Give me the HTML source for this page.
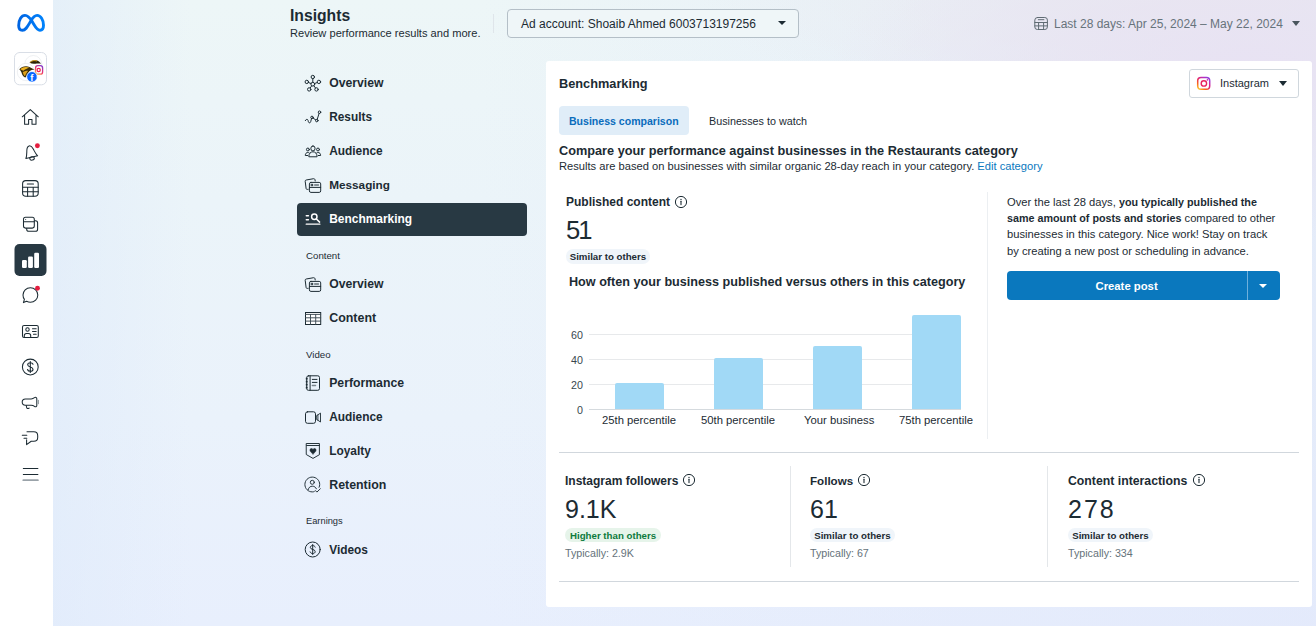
<!DOCTYPE html>
<html lang="en">
<head>
<meta charset="utf-8">
<title>Insights</title>
<style>
*{box-sizing:border-box;margin:0;padding:0}
html,body{width:1316px;height:626px;overflow:hidden}
body{font-family:"Liberation Sans",sans-serif;color:#1c2b33;position:relative;
background:
 radial-gradient(ellipse 420px 170px at 1250px 70px, rgba(232,226,243,1) 0%, rgba(232,227,242,.7) 45%, rgba(232,228,240,0) 100%),
 radial-gradient(ellipse 500px 120px at 1200px 0px, rgba(233,232,238,.9) 0%, rgba(233,232,238,0) 100%),
 linear-gradient(90deg, rgba(222,234,250,.55) 53px, rgba(222,234,250,0) 190px),
 linear-gradient(90deg, rgba(224,230,250,0) 480px, rgba(224,230,250,.55) 1316px),
 linear-gradient(180deg,#edf6f7 0px,#ebf4f9 200px,#eaf2fb 420px,#e8effd 626px);}
.abs{position:absolute}
#rail{left:0;top:0;width:53px;height:626px;background:#fff}
.t{position:absolute;white-space:nowrap;line-height:1}
.b{font-weight:700}
#card{left:546px;top:61px;width:766px;height:546.400px;background:#fff;border-radius:3px}
.nav{position:absolute;left:329.200px;font-weight:700;font-size:12.3px;white-space:nowrap;line-height:14px}
.sec{position:absolute;left:306px;font-size:9.7px;white-space:nowrap;line-height:1}
.pill{position:absolute;height:14.500px;border-radius:7.250px;font-size:9.7px;font-weight:700;line-height:15.5px;padding:0 5px;white-space:nowrap}
.bar{position:absolute;background:#a1d9f6;border-radius:2px 2px 0 0}
.grid{position:absolute;left:589px;width:372px;height:1px;background:#e7e9eb}
</style>
</head>
<body>
<div id="rail" class="abs"></div>
<svg class="abs" style="left:0;top:0" width="53" height="626" viewBox="0 0 53 626" fill="none" stroke="#1c2b33" stroke-width="1.05" stroke-linecap="round" stroke-linejoin="round">
<defs>
<linearGradient id="mg" x1="0" y1="0" x2="1" y2="0"><stop offset="0" stop-color="#0064e1"/><stop offset=".5" stop-color="#0073f0"/><stop offset="1" stop-color="#0082fb"/></linearGradient>
<linearGradient id="ig" x1="0.200" y1="1" x2=".8" y2="0"><stop offset="0" stop-color="#fcb045"/><stop offset=".45" stop-color="#f0336a"/><stop offset="1" stop-color="#8a3ac8"/></linearGradient>
</defs>
<!-- meta logo -->
<path d="M18.700 25.500C18.700 19.500 21.500 15.400 25 15.400C28 15.400 30 18 32.200 21.600C35 26.200 36.800 30.300 40 30.300C42.400 30.300 43.500 28.200 43.500 25.300C43.500 19.800 40.600 15.400 37.100 15.400C34.600 15.400 32.800 17.600 30.800 21C27.600 26.400 25.800 30.300 22.400 30.300C20 30.300 18.700 28.400 18.700 25.500Z" stroke="url(#mg)" stroke-width="2.900"/>
<!-- avatar -->
<rect x="14.500" y="52.500" width="32" height="32.300" rx="5" fill="#fff" stroke="#d9dee6" stroke-width="1"/>
<circle cx="33.300" cy="64" r="8.500" fill="#fff" stroke="#e6e9ec" stroke-width=".7"/>
<path d="M29.500 62.800C31 60.300 34.500 59.600 37 60.600C38.800 61.300 40 62.500 41.200 63.600C39 63.400 37.500 63.200 35.500 63.700C33.500 64.100 31.500 63.800 29.500 62.800Z" fill="#2b2208" stroke="none"/>
<path d="M30.300 62.100C31.800 60.600 34.300 60.100 36.600 60.900" stroke="#e3a81b" stroke-width=".9"/>
<circle cx="26" cy="72" r="8.700" fill="#fff" stroke="#e6e9ec" stroke-width=".7"/>
<path d="M19.300 69.300C21.500 66.500 26 65.500 29.500 67C31.500 67.900 33 69 34.600 69.600C32.500 69.800 31 70.200 29.500 71.200C28 72.500 27.500 75 25.500 77.600C23.500 77 22 75 21.500 72.500C20.800 71 20 70 19.300 69.300Z" fill="#3a2d0a" stroke="none"/>
<path d="M20.300 69.200C22.500 67.200 26 66.500 29.200 67.700C27 68.200 25 69.200 23.300 70.700Z" fill="#eeb21f" stroke="none"/>
<path d="M22.800 72.200C24.500 71 26.500 70.500 28.200 70.800C26.700 72.500 25.700 74.500 25 76.300C23.800 75.200 23.100 73.700 22.800 72.200Z" fill="#dda119" stroke="none"/>
<rect x="35.600" y="65.700" width="7" height="8.500" rx="2.200" fill="#fff" stroke="url(#ig)" stroke-width="1.300"/>
<circle cx="38.700" cy="70" r="1.600" stroke="#ee1d52" stroke-width="1.200"/>
<circle cx="32" cy="76.800" r="5.300" fill="#0866ff" stroke="#fff" stroke-width=".8"/>
<!-- home -->
<path d="M22.300 116.800L30.300 109.600L38.300 116.800M24.600 115.200V124.300H28.600V119.400H32V124.300H36V115.200"/>
<!-- bell -->
<g transform="rotate(-13 30.800 153)">
<path d="M24.800 157.300C26.400 154.800 26.800 152.300 27.500 149.700C28.100 147.400 29.300 145.700 30.800 145.700C32.300 145.700 33.500 147.400 34.100 149.700C34.800 152.300 35.200 154.800 36.800 157.300Z"/>
<ellipse cx="30.800" cy="158.600" rx="2.300" ry="1.700"/>
</g>
<circle cx="37.400" cy="145.800" r="2.450" fill="#e41e3f" stroke="none"/>
<!-- table -->
<rect x="22.600" y="180.600" width="15.600" height="15.600" rx="3.200"/>
<path d="M22.600 187.200H38.200M22.600 191.700H38.200M27.600 187.200V196.200M33.200 187.200V196.200M27.300 184H33.500"/>
<!-- pages -->
<path d="M34.700 220.700H35.500C36.700 220.700 37.600 221.600 37.600 222.800V229.200C37.600 230.400 36.700 231.300 35.500 231.300H28.800C27.600 231.300 26.700 230.400 26.700 229.200V228.400"/>
<rect x="23.500" y="217.300" width="10.800" height="10.800" rx="2"/>
<path d="M23.500 221.800H34.300"/><circle cx="25.700" cy="219.600" r=".5" fill="#1c2b33" stroke="none"/>
<!-- active tile -->
<rect x="14.500" y="244" width="32" height="32" rx="5" fill="#283943" stroke="none"/>
<rect x="22" y="260" width="4.800" height="8" rx="1.200" fill="#fff" stroke="none"/>
<rect x="28.100" y="256.400" width="4.800" height="11.600" rx="1.200" fill="#fff" stroke="none"/>
<rect x="34.200" y="252.800" width="4.800" height="15.200" rx="1.200" fill="#fff" stroke="none"/>
<!-- chat -->
<path d="M30.400 287.700C34.500 287.700 37.800 290.900 37.800 295C37.800 299.100 34.500 302.300 30.400 302.300C29 302.300 27.700 301.900 26.600 301.300L23.400 302.600L24.400 299.400C23.500 298.200 23 296.700 23 295C23 290.900 26.300 287.700 30.400 287.700Z"/>
<circle cx="37.500" cy="288.200" r="2.450" fill="#e41e3f" stroke="none"/>
<!-- id card -->
<rect x="22.500" y="325.500" width="15.800" height="12" rx="1.600"/>
<circle cx="27.500" cy="329.500" r="1.700"/>
<path d="M24.300 337.300V335.600C24.300 334.300 25.300 333.400 26.500 333.400H28.500C29.700 333.400 30.700 334.300 30.700 335.600V337.300M32.500 328.800H36.200M32.500 331.500H36.200M33.500 334.200H36.200" />
<!-- dollar -->
<circle cx="30.300" cy="367" r="7.900"/>
<path d="M33 364.300C32.600 363.200 31.600 362.700 30.300 362.700C28.700 362.700 27.700 363.500 27.700 364.700C27.700 367.500 33 366.300 33 369.200C33 370.500 31.900 371.300 30.300 371.300C28.900 371.300 27.800 370.700 27.500 369.500M30.300 361.500V372.500" stroke-width="1.100"/>
<!-- megaphone -->
<path d="M25.400 398.900H31.200C32.600 398.900 33.600 398.400 34.500 397.700C35.500 396.900 36.800 397.400 36.800 398.700V405.400C36.800 406.700 35.500 407.200 34.500 406.400C33.600 405.700 32.600 405.200 31.200 405.200H25.400C23.500 405.200 22.200 403.800 22.200 402.050C22.200 400.300 23.500 398.900 25.400 398.900Z"/>
<path d="M26.200 405.500L26.700 407.600C26.900 408.400 27.700 408.700 28.500 408.400L29.200 408.100"/>
<path d="M38.400 400.300V403.800" stroke="#8a949b" stroke-width="1"/>
<!-- speech lines -->
<path d="M27 431.800H33.800C36.100 431.800 37.700 433.400 37.700 435.700V437.500C37.700 439.800 36.100 441.300 33.800 441.300H31.200L26.600 444.600V441.300V439.800M22.300 435.300H26.800M24 438.200H26.800"/>
<!-- hamburger -->
<path d="M23.300 468.500H37.900M23.300 474.500H37.900" stroke-width="1"/>
<path d="M23.300 480.200H37.900" stroke="#9aa3a9" stroke-width="1.800"/>
</svg>
<div class="t b" style="left:30.300px;top:72.500px;font-size:9.500px;color:#fff;font-family:'Liberation Sans',sans-serif">f</div>


<!-- header -->
<div class="t b" style="left:290px;top:6.800px;font-size:15.7px;line-height:18px">Insights</div>
<div class="t" style="left:290px;top:27px;font-size:11.1px;line-height:13px">Review performance results and more.</div>
<div class="abs" style="left:493px;top:14px;width:1px;height:19px;background:#dfe5ea"></div>
<div class="abs" style="left:507px;top:9px;width:292px;height:29px;border:1px solid #b4bfc7;border-radius:4px;background:#eff6f8"></div>
<div class="t" style="left:521px;top:18px;font-size:12px;line-height:13px">Ad account: Shoaib Ahmed 6003713197256</div>
<div class="abs" style="left:778.300px;top:21.300px;width:0;height:0;border-left:4.400px solid transparent;border-right:4.400px solid transparent;border-top:4.500px solid #1c2b33"></div>
<div class="t" style="left:1054px;top:18px;font-size:12px;line-height:13px;color:#67737b">Last 28 days: Apr 25, 2024 – May 22, 2024</div>
<div class="abs" style="left:1292px;top:21px;width:0;height:0;border-left:4.5px solid transparent;border-right:4.5px solid transparent;border-top:5px solid #4a565e"></div>

<!-- nav -->
<div class="abs" style="left:297px;top:203px;width:230px;height:33px;background:#283943;border-radius:4px"></div>
<div class="nav" style="top:76px;font-size:12.21px">Overview</div>
<div class="nav" style="top:110px;font-size:11.85px">Results</div>
<div class="nav" style="top:144px;font-size:11.9px">Audience</div>
<div class="nav" style="top:178px;font-size:11.78px">Messaging</div>
<div class="nav" style="top:212px;color:#fff;font-size:11.95px">Benchmarking</div>
<div class="sec" style="top:251px">Content</div>
<div class="nav" style="top:277px;font-size:12.21px">Overview</div>
<div class="nav" style="top:311px;font-size:12.45px">Content</div>
<div class="sec" style="top:350px">Video</div>
<div class="nav" style="top:376px;font-size:12.24px">Performance</div>
<div class="nav" style="top:410px;font-size:11.9px">Audience</div>
<div class="nav" style="top:444px;font-size:11.9px">Loyalty</div>
<div class="nav" style="top:478px;font-size:12.4px">Retention</div>
<div class="sec" style="top:517px;font-size:9.3px">Earnings</div>
<div class="nav" style="top:543px;font-size:11.9px">Videos</div>

<svg class="abs" style="left:296px;top:66px" width="40" height="500" viewBox="296 66 40 500" fill="none" stroke="#1c2b33" stroke-width="1" stroke-linecap="round" stroke-linejoin="round">
<!-- overview hub -->
<circle cx="312.800" cy="84.200" r="1.900"/>
<circle cx="312.800" cy="77" r="1.700"/><circle cx="306.800" cy="81.900" r="1.700"/><circle cx="318.900" cy="81.900" r="1.700"/><circle cx="309.200" cy="89.400" r="1.700"/><circle cx="316.500" cy="89.400" r="1.700"/>
<path d="M312.800 78.700V82.300M308.400 82.500L311 83.500M317.300 82.500L314.600 83.500M310.200 88L311.700 85.800M315.500 88L313.900 85.800"/>
<!-- results -->
<path d="M305.300 120.600C306 119 307.600 118.800 308 120.300L308.400 121.800C308.800 123.200 310.300 123.200 310.700 121.700L311.500 118.600"/>
<circle cx="312" cy="117.400" r="1.250"/>
<path d="M313.100 118.100L315.700 119.900"/>
<circle cx="316.800" cy="120.600" r="1.250"/>
<path d="M317.200 119.400L319.100 113.400"/>
<circle cx="319.500" cy="112.200" r="1.250"/>
<!-- audience -->
<rect x="310.900" y="146" width="4.100" height="4.900" rx="2.050"/>
<path d="M308.800 156.400C308.800 153.600 310.500 151.800 312.950 151.800C315.400 151.800 317.100 153.600 317.100 156.400Z"/>
<circle cx="307.900" cy="149.500" r="1.450"/><circle cx="318" cy="149.500" r="1.450"/>
<path d="M307.600 155.500H305.300C305.300 153.600 306.300 152.500 307.800 152.500C308.300 152.500 308.700 152.600 309.100 152.800M318.300 155.500H320.600C320.600 153.600 319.600 152.500 318.100 152.500C317.600 152.500 317.200 152.600 316.800 152.800"/>
<!-- messaging -->
<g id="msg">
<path d="M308.200 189.300L307.300 189.400C306.600 189.500 306.200 189.100 306.100 188.500L305.200 181.300C305.100 180.600 305.500 180.100 306.200 180L313.600 178.700C314.300 178.600 314.800 179 315 179.700L315.200 181"/>
<rect x="309.400" y="182.400" width="11.300" height="10" rx="1.500"/>
<path d="M309.400 187.400H320.700M314.600 185H318.500"/><rect x="311.300" y="184.200" width="1.600" height="1.600" fill="#1c2b33" stroke-width=".5"/>
</g>
<use href="#msg" y="99"/>
<!-- benchmarking -->
<g stroke="#fff" stroke-width="1.500">
<circle cx="314.300" cy="216.800" r="2.700"/><path d="M316.400 219L319.600 222.100M306.300 215.800H308.400M306.300 219.800H308.400"/>
</g>
<path d="M306.200 224.200H319.900" stroke="#fff" stroke-width="1.250"/>
<!-- content table -->
<rect x="305.500" y="312.500" width="15.200" height="12" fill="#fff" stroke-linejoin="miter"/>
<path d="M305.500 314.400H320.700M305.500 317.800H320.700M305.500 321.100H320.700M310.500 314.400V324.500M315.700 314.400V324.500" stroke-width=".95" stroke="#3d4b53"/>
<!-- performance notebook -->
<rect x="306.700" y="375.800" width="12.800" height="14.500" rx="1.700"/>
<path d="M310.100 375.800V390.300"/>
<path d="M306.700 378.600V378.700M306.700 381.600V381.700M306.700 384.600V384.700M306.700 387.600V387.700" stroke-width="1.800" stroke-linecap="square"/>
<path d="M312.300 379.400H317M312.300 382.400H317"/><path d="M312.300 385.500H315.600" stroke="#7b868d" stroke-width="1.300"/>
<!-- video -->
<rect x="305.500" y="411.800" width="10" height="11.500" rx="2"/>
<path d="M316.600 415.700L320.500 413.100V422L316.600 419.400ZM317.900 415V420.100" stroke-width=".9"/>
<!-- loyalty -->
<path d="M306.600 443.500H319.400V454.700L313 458.400L306.600 454.700ZM306.600 445.500H319.400" stroke-width=".95"/>
<path d="M313 454C311.400 452.800 309.900 451.600 309.900 450.100C309.900 448.400 312 447.900 313 449.400C314 447.900 316.100 448.400 316.100 450.100C316.100 451.600 314.600 452.800 313 454Z" fill="#1c2b33" stroke-width=".5"/>
<!-- retention -->
<path d="M314.200 491.600C313.600 491.800 313 491.900 312.300 491.900C308.200 491.900 304.900 488.600 304.900 484.500C304.900 480.400 308.200 477.100 312.300 477.100C316.400 477.100 319.700 480.400 319.700 484.500C319.700 485.500 319.500 486.500 319.100 487.300" stroke-width=".95"/>
<circle cx="312.300" cy="482.300" r="2" stroke-width=".95"/>
<path d="M308.200 489.600C308.700 487.400 310.300 486.200 312.300 486.200C314.300 486.200 315.800 487.300 316.400 488.800" stroke-width=".95"/>
<path d="M315.300 490.500L316.900 492.100L320.300 488.800" stroke-width=".95"/>
<!-- videos $ -->
<circle cx="312.700" cy="549.500" r="7.500"/>
<path d="M315.200 547.100C314.900 546.100 313.900 545.600 312.700 545.600C311.200 545.600 310.300 546.300 310.300 547.400C310.300 550 315.200 548.900 315.200 551.600C315.200 552.800 314.200 553.500 312.700 553.500C311.400 553.500 310.400 553 310.100 551.900M312.700 544.500V554.500"/>
</svg>

<!-- card -->
<div id="card" class="abs"></div>
<div class="t b" style="left:559px;top:78.200px;font-size:12.75px">Benchmarking</div>
<div class="abs" style="left:1189px;top:69px;width:110px;height:28.600px;border:1px solid #d0d7dd;border-radius:3px;background:#fff"></div>
<div class="t" style="left:1220px;top:78px;font-size:11px">Instagram</div>
<div class="abs" style="left:1278.700px;top:81px;width:0;height:0;border-left:4.400px solid transparent;border-right:4.400px solid transparent;border-top:5px solid #1c2b33"></div>

<div class="abs" style="left:559px;top:106px;width:130px;height:29px;background:#e0edf8;border-radius:4px"></div>
<div class="t b" style="left:569px;top:115.600px;font-size:10.55px;color:#0a6cbc">Business comparison</div>
<div class="t" style="left:709px;top:115.600px;font-size:10.75px">Businesses to watch</div>

<div class="t b" style="left:559px;top:144.800px;font-size:12.73px">Compare your performance against businesses in the Restaurants category</div>
<div class="t" style="left:559px;top:161px;font-size:11.16px">Results are based on businesses with similar organic 28-day reach in your category. <span style="color:#0a78be">Edit category</span></div>

<div class="t b" style="left:566px;top:196px;font-size:12px">Published content</div>
<div class="t" style="left:566px;top:217.500px;font-size:25.6px;letter-spacing:-2px">51</div>
<div class="pill" style="left:565.500px;top:249px;background:#f0f5fa;padding:0 4.200px">Similar to others</div>
<div class="t b" style="left:569px;top:276.200px;font-size:12.64px">How often your business published versus others in this category</div>

<!-- chart -->
<div class="grid" style="top:334px"></div>
<div class="grid" style="top:359px"></div>
<div class="grid" style="top:384px"></div>
<div class="grid" style="top:409px;background:#d5dade"></div>
<div class="bar" style="left:615px;top:383px;width:49px;height:26px"></div>
<div class="bar" style="left:714px;top:358px;width:49px;height:51px"></div>
<div class="bar" style="left:813px;top:346px;width:49px;height:63px"></div>
<div class="bar" style="left:912px;top:315px;width:49px;height:94px"></div>
<div class="t" style="left:571px;top:330px;font-size:10.7px;color:#38474f">60</div>
<div class="t" style="left:571px;top:355px;font-size:10.7px;color:#38474f">40</div>
<div class="t" style="left:571px;top:380px;font-size:10.7px;color:#38474f">20</div>
<div class="t" style="left:577px;top:405px;font-size:10.7px;color:#38474f">0</div>
<div class="t" style="left:602px;top:415px;font-size:11.28px">25th percentile</div>
<div class="t" style="left:701px;top:415px;font-size:11.28px">50th percentile</div>
<div class="t" style="left:804px;top:415px;font-size:11.28px">Your business</div>
<div class="t" style="left:899px;top:415px;font-size:11.28px">75th percentile</div>

<div class="abs" style="left:987px;top:192px;width:1px;height:247px;background:#eceff2"></div>
<div class="t" style="left:1007px;top:194px;font-size:11.2px;line-height:16.2px;white-space:nowrap">Over the last 28 days, <b style="font-size:10.75px">you typically published the</b><br><b style="font-size:10.75px">same amount of posts and stories</b> compared to other<br>businesses in this category. Nice work! Stay on track<br>by creating a new post or scheduling in advance.</div>
<div class="abs" style="left:1007px;top:271.300px;width:273px;height:29.200px;background:#0a78be;border-radius:4px"></div>
<div class="abs" style="left:1246.500px;top:271.300px;width:1px;height:29.200px;background:#6fb0dc"></div>
<div class="t b" style="left:1095.500px;top:280.800px;font-size:11.3px;color:#fff">Create post</div>
<div class="abs" style="left:1259.200px;top:284px;width:0;height:0;border-left:4.600px solid transparent;border-right:4.600px solid transparent;border-top:4.800px solid #fff"></div>

<div class="abs" style="left:559px;top:452px;width:740px;height:1px;background:#d1d7dd"></div>
<div class="abs" style="left:559px;top:581px;width:740px;height:1px;background:#d1d7dd"></div>
<div class="abs" style="left:790px;top:466px;width:1px;height:101px;background:#e4e7ea"></div>
<div class="abs" style="left:1047px;top:466px;width:1px;height:101px;background:#e4e7ea"></div>

<div class="t b" style="left:565px;top:475px;font-size:12px">Instagram followers</div>
<div class="t" style="left:565px;top:497px;font-size:25px">9.1K</div>
<div class="pill" style="left:565px;top:527.500px;background:#e6f4ea;color:#0d7a3c">Higher than others</div>
<div class="t" style="left:565px;top:548px;font-size:10.7px;color:#65727a">Typically: 2.9K</div>

<div class="t b" style="left:810px;top:475px;font-size:11.6px">Follows</div>
<div class="t" style="left:810px;top:497px;font-size:25px">61</div>
<div class="pill" style="left:810px;top:527.500px;background:#f0f5fa;padding:0 4.200px">Similar to others</div>
<div class="t" style="left:810px;top:548px;font-size:10.7px;color:#65727a">Typically: 67</div>

<div class="t b" style="left:1068px;top:475px;font-size:12.28px">Content interactions</div>
<div class="t" style="left:1068px;top:497px;font-size:25px;letter-spacing:2px">278</div>
<div class="pill" style="left:1068px;top:527.500px;background:#f0f5fa;padding:0 4.200px">Similar to others</div>
<div class="t" style="left:1068px;top:548px;font-size:10.7px;color:#65727a">Typically: 334</div>

<svg class="abs" style="left:673.6px;top:194.5px" width="14" height="14" viewBox="0 0 14 14" fill="none" stroke="#1c2b33" stroke-width="1"><circle cx="7" cy="7" r="5.600"/><path d="M7 6.300V9.600" stroke-width="1.100" stroke-linecap="round"/><circle cx="7" cy="4.500" r=".7" fill="#1c2b33" stroke="none"/></svg>
<svg class="abs" style="left:682.3px;top:473.3px" width="14" height="14" viewBox="0 0 14 14" fill="none" stroke="#1c2b33" stroke-width="1"><circle cx="7" cy="7" r="5.600"/><path d="M7 6.300V9.600" stroke-width="1.100" stroke-linecap="round"/><circle cx="7" cy="4.500" r=".7" fill="#1c2b33" stroke="none"/></svg>
<svg class="abs" style="left:856.6px;top:473.3px" width="14" height="14" viewBox="0 0 14 14" fill="none" stroke="#1c2b33" stroke-width="1"><circle cx="7" cy="7" r="5.600"/><path d="M7 6.300V9.600" stroke-width="1.100" stroke-linecap="round"/><circle cx="7" cy="4.500" r=".7" fill="#1c2b33" stroke="none"/></svg>
<svg class="abs" style="left:1191.5px;top:473.3px" width="14" height="14" viewBox="0 0 14 14" fill="none" stroke="#1c2b33" stroke-width="1"><circle cx="7" cy="7" r="5.600"/><path d="M7 6.300V9.600" stroke-width="1.100" stroke-linecap="round"/><circle cx="7" cy="4.500" r=".7" fill="#1c2b33" stroke="none"/></svg>
<svg class="abs" style="left:1033px;top:16px" width="16" height="16" viewBox="1033 16 16 16" fill="none" stroke="#5f6b73" stroke-width="1" stroke-linecap="round"><rect x="1034.800" y="17.500" width="12.600" height="12" rx="2.600"/><path d="M1034.800 22.500H1047.400M1034.800 25.900H1047.400M1038.600 22.500V29.500M1043.600 22.500V29.500M1038.300 19.700H1043.900"/></svg>
<svg class="abs" style="left:1196px;top:76px" width="16" height="16" viewBox="1196 76 16 16" fill="none"><defs><linearGradient id="ig2" x1="0.100" y1="1" x2=".9" y2="0"><stop offset="0" stop-color="#fdc12a"/><stop offset=".25" stop-color="#f7631f"/><stop offset=".5" stop-color="#e9245f"/><stop offset=".8" stop-color="#b62fc0"/><stop offset="1" stop-color="#8b3fe0"/></linearGradient></defs><rect x="1197.700" y="77.500" width="12" height="11.700" rx="3.300" stroke="url(#ig2)" stroke-width="1.500"/><circle cx="1203.900" cy="83.400" r="2.700" stroke="#e8235e" stroke-width="1.400"/><circle cx="1207.400" cy="79.900" r=".8" fill="#c52bb0"/></svg>
</body>
</html>
